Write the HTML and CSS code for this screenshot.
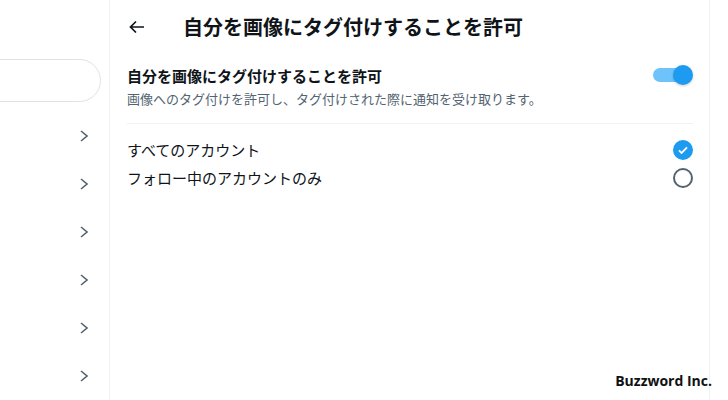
FILE: index.html
```html
<!DOCTYPE html>
<html lang="ja">
<head>
    <meta charset="UTF-8">
    <meta name="viewport" content="width=device-width, initial-scale=1.0">
    <title>写真のタグ付け</title>
    <link rel="stylesheet" href="styles.css">
</head>
<body>
    <div class="layout">
        <aside class="sidebar">
            <div class="search-wrap">
                <div class="search-box"></div>
            </div>
            <ul class="nav-list">
                <li class="nav-item"><svg class="chevron" viewBox="0 0 8 12"><path d="M1 1l6 5-6 5"/></svg></li>
                <li class="nav-item"><svg class="chevron" viewBox="0 0 8 12"><path d="M1 1l6 5-6 5"/></svg></li>
                <li class="nav-item"><svg class="chevron" viewBox="0 0 8 12"><path d="M1 1l6 5-6 5"/></svg></li>
                <li class="nav-item"><svg class="chevron" viewBox="0 0 8 12"><path d="M1 1l6 5-6 5"/></svg></li>
                <li class="nav-item"><svg class="chevron" viewBox="0 0 8 12"><path d="M1 1l6 5-6 5"/></svg></li>
                <li class="nav-item"><svg class="chevron" viewBox="0 0 8 12"><path d="M1 1l6 5-6 5"/></svg></li>
            </ul>
        </aside>

        <main class="panel">
            <header class="panel-header">
                <svg class="back-icon" viewBox="0 0 20 20"><path d="M17 10H4M9 4.5L3.5 10 9 15.5"/></svg>
                <h1>自分を画像にタグ付けすることを許可</h1>
            </header>

            <div class="setting">
                <div class="setting-text">
                    <div class="setting-label">自分を画像にタグ付けすることを許可</div>
                    <div class="setting-desc">画像へのタグ付けを許可し、タグ付けされた際に通知を受け取ります。</div>
                </div>
                <div class="toggle">
                    <span class="toggle-track"></span>
                    <span class="toggle-knob"></span>
                </div>
            </div>

            <div class="options">
                <div class="option">
                    <span>すべてのアカウント</span>
                    <span class="radio checked">
                        <svg viewBox="0 0 20 20"><path d="M6 10.3l2.6 2.6L14 7.4"/></svg>
                    </span>
                </div>
                <div class="option">
                    <span>フォロー中のアカウントのみ</span>
                    <span class="radio"></span>
                </div>
            </div>
        </main>

        <div class="rest"></div>
    </div>

    <div class="watermark">Buzzword Inc.</div>
</body>
</html>
```

FILE: styles.css
```css
body {
    margin: 0;
    font-family: "Noto Sans CJK JP", "Noto Sans", sans-serif;
    color: #0f1419;
    background-color: #ffffff;
    overflow: hidden;
}
.layout {
    display: flex;
    height: 400px;
}
.sidebar {
    width: 109px;
    border-right: 1px solid #eff3f4;
    overflow: hidden;
}
.search-wrap {
    padding: 59px 8px 0 0;
}
.search-box {
    height: 41px;
    margin-left: -60px;
    border: 1px solid #dfe3e6;
    border-radius: 22px;
}
.nav-list {
    list-style: none;
    margin: 10px 0 0;
    padding: 0;
}
.nav-item {
    height: 48px;
    display: flex;
    align-items: center;
    justify-content: flex-end;
    padding-right: 21px;
}
.chevron {
    width: 8px;
    height: 12px;
    fill: none;
    stroke: #536471;
    stroke-width: 1.6;
}
.panel {
    width: 566px;
    padding: 0 16px 0 17px;
    border-right: 1px solid #eff3f4;
}
.panel-header {
    height: 53px;
    display: flex;
    align-items: center;
}
.back-icon {
    width: 20px;
    height: 20px;
    margin: 0 36px 0 0;
    fill: none;
    stroke: #0f1419;
    stroke-width: 1.7;
}
.panel-header h1 {
    margin: 0;
    font-size: 20px;
    font-weight: 700;
    line-height: 24px;
}
.setting {
    display: flex;
    align-items: center;
    justify-content: space-between;
    padding: 12px 0 14px;
    border-bottom: 1px solid #eff3f4;
}
.setting-label {
    font-size: 15px;
    font-weight: 700;
    line-height: 20px;
}
.setting-desc {
    font-size: 13px;
    color: #536471;
    line-height: 18px;
    margin-top: 4px;
}
.toggle {
    position: relative;
    width: 40px;
    height: 20px;
    margin-bottom: 24px;
}
.toggle-track {
    display: block;
    width: 30px;
    height: 14px;
    margin: 3px 0 0 0;
    border-radius: 7px;
    background-color: #6ec4fa;
}
.toggle-knob {
    position: absolute;
    right: 0;
    top: 0;
    width: 20px;
    height: 20px;
    border-radius: 50%;
    background-color: #1d9bf0;
    box-shadow: 0 1px 3px rgba(0, 0, 0, 0.2);
}
.options {
    padding-top: 12px;
}
.option {
    display: flex;
    align-items: center;
    justify-content: space-between;
    height: 28px;
    font-size: 15px;
    line-height: 20px;
    color: #0f1419;
}
.radio {
    width: 16px;
    height: 16px;
    border: 2px solid #536471;
    border-radius: 50%;
}
.radio.checked {
    border-color: #1d9bf0;
    background-color: #1d9bf0;
}
.radio svg {
    display: block;
    width: 20px;
    height: 20px;
    margin: -2px;
    fill: none;
    stroke: #ffffff;
    stroke-width: 1.8;
}
.rest {
    flex: 1;
}
.watermark {
    position: absolute;
    right: 16px;
    bottom: 10px;
    font-family: "Open Sans", "Liberation Sans", sans-serif;
    font-weight: 700;
    font-size: 14px;
    color: #111111;
}
```
